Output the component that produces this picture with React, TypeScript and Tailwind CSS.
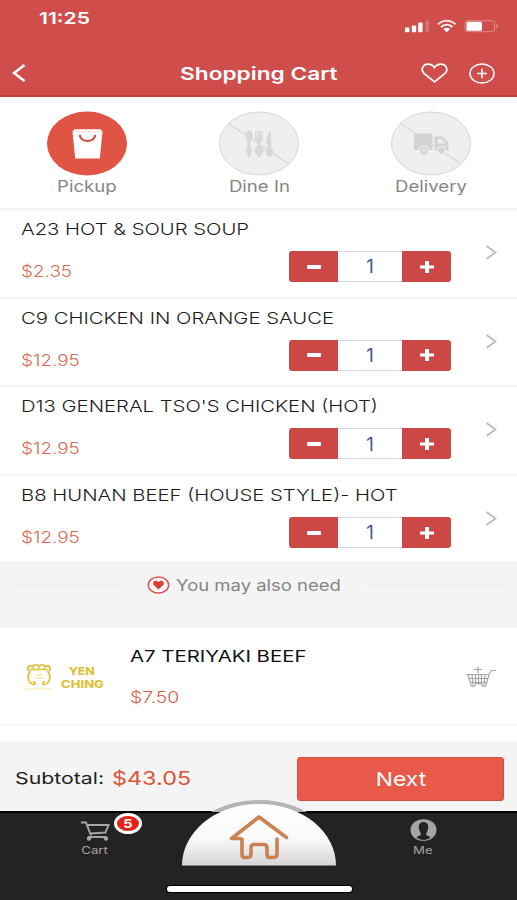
import React from 'react';

const cartItems = [
  { id: 1, name: 'A23 HOT & SOUR SOUP', price: '$2.35', quantity: 1 },
  { id: 2, name: 'C9 CHICKEN IN ORANGE SAUCE', price: '$12.95', quantity: 1 },
  { id: 3, name: "D13 GENERAL TSO'S CHICKEN (HOT)", price: '$12.95', quantity: 1 },
  { id: 4, name: 'B8 HUNAN BEEF (HOUSE STYLE)- HOT', price: '$12.95', quantity: 1 },
];

function StatusIcons() {
  return (
    <svg className="mt-[19px] h-[14px] w-[94px]" viewBox="0 0 94 14" fill="none">
      <g fill="#fff">
        <rect x="0" y="8.5" width="4.4" height="4.8" rx="1" />
        <rect x="6.8" y="6.5" width="4.4" height="6.8" rx="1" />
        <rect x="13.2" y="3.5" width="4.4" height="9.8" rx="1" />
        <rect x="20.4" y="1.5" width="3.6" height="11.8" rx="1" opacity="0.22" />
      </g>
      <path d="M33 5.4C38 0.6 45.5 0.6 50.5 5.4" stroke="#fbe3e2" strokeWidth="2" />
      <path d="M36 8C39.5 4.9 44 4.9 47.5 8" stroke="#fff" strokeWidth="2" />
      <path d="M38.4 10C40.5 8.2 43 8.2 45.1 10L41.75 13.2Z" fill="#fff" />
      <rect x="60" y="1.7" width="29.5" height="11" rx="3" stroke="#e08b89" strokeWidth="1" />
      <rect x="61.5" y="2.7" width="15.5" height="9" rx="1.5" fill="#fff" />
      <path d="M91.5 5.2C93.2 6 93.2 8.4 91.5 9.2Z" fill="#e9a9a8" />
    </svg>
  );
}

function Header() {
  return (
    <header className="h-[97px] border-b-2 border-[#c23f3e] bg-[#cf4e4c] text-white">
      <div className="flex h-[49px] items-start justify-between pl-[39px] pr-[18px]">
        <span className="mt-[8px] origin-left scale-x-[1.28] text-[16.5px] font-semibold leading-5">11:25</span>
        <StatusIcons />
      </div>
      <div className="grid h-[48px] grid-cols-[1fr_auto_1fr] items-center">
        <svg className="ml-[12px] h-[18px] w-[14px]" viewBox="0 0 14 18" fill="none" stroke="#fff" strokeWidth="2.6">
          <path d="M12.5 1L2 9L12.5 17" />
        </svg>
        <h1 className="scale-x-[1.295] pt-px text-[17.5px] font-semibold leading-6">Shopping Cart</h1>
        <div className="flex items-center justify-end gap-[21px] pr-[22px]">
          <svg className="h-[20px] w-[27px]" viewBox="0 0 27 20" fill="none" stroke="#fff" strokeWidth="1.7">
            <path d="M13.5 18.8L3 10.4C-0.5 7 1.6 1.2 7 1.2C10.3 1.2 12.3 2.6 13.5 4.6C14.7 2.6 16.7 1.2 20 1.2C25.4 1.2 27.5 7 24 10.4Z" />
          </svg>
          <svg className="h-[21px] w-[26px]" viewBox="0 0 26 21" fill="none" stroke="#fff" strokeWidth="1.5">
            <ellipse cx="13" cy="10.5" rx="12" ry="9.6" />
            <path d="M8 10.5H18M13 5.7V15.3" strokeWidth="1.6" />
          </svg>
        </div>
      </div>
    </header>
  );
}

function PickupIcon() {
  return (
    <svg className="h-[65px] w-[82px]" viewBox="0 0 82 65">
      <ellipse cx="41" cy="32.5" rx="40" ry="32" fill="#e05443" />
      <path d="M26.5 20.5L28.5 18.2H54.5L56.5 20.5L53.8 47.6H29.2Z" fill="#fff" />
      <path d="M26.5 20.7H56.5" stroke="#f3c4be" strokeWidth="0.7" />
      <path d="M34 25C36 31.5 47 31.5 49 25" fill="none" stroke="#d54b3b" strokeWidth="2" />
      <circle cx="34" cy="25" r="1.2" fill="#d54b3b" />
      <circle cx="49" cy="25" r="1.2" fill="#d54b3b" />
    </svg>
  );
}

function DisabledIcon({ children }: { children: React.ReactNode }) {
  return (
    <svg className="h-[65px] w-[82px]" viewBox="0 0 82 65">
      <ellipse cx="41" cy="32.5" rx="39.5" ry="31.5" fill="#efefef" stroke="#d6d6d6" />
      <path d="M10 12L71 53" stroke="#d6d6d6" strokeWidth="1.2" />
      {children}
    </svg>
  );
}

function DineInIcon() {
  return (
    <DisabledIcon>
      <g fill="#d8d8d8">
        <ellipse cx="31" cy="24" rx="3.8" ry="4.5" />
        <rect x="29.4" y="27" width="3.2" height="19" rx="1.5" />
        <path d="M37 20H38.4V26H39.4V20H42.6V26H43.6V20H45V28L42.6 31V46H39.4V31L37 28Z" />
        <path d="M53 19.5V46H49.8V33H48C48.5 27 50 22 53 19.5Z" />
        <ellipse cx="41" cy="39.5" rx="4.5" ry="5" />
        <ellipse cx="51.5" cy="41" rx="4" ry="4.5" />
        <ellipse cx="31" cy="40" rx="2.8" ry="4" />
      </g>
    </DisabledIcon>
  );
}

function DeliveryIcon() {
  return (
    <DisabledIcon>
      <g fill="#d3d3d3">
        <rect x="24" y="22.5" width="18.5" height="16.5" />
        <path d="M44.5 25.5H52L58.5 31V39.5H44.5Z" />
        <circle cx="34" cy="39.5" r="4.5" stroke="#efefef" strokeWidth="1.3" />
        <circle cx="51.5" cy="39.5" r="3.8" stroke="#efefef" strokeWidth="1.3" />
      </g>
      <path d="M47.5 28H51L55 31.5V32.5H47.5Z" fill="#efefef" />
      <path d="M32 39.5H36M34 37.5V41.5" stroke="#efefef" strokeWidth="0.9" />
    </DisabledIcon>
  );
}

function OrderTypes() {
  const types = [
    { label: 'Pickup', icon: <PickupIcon /> },
    { label: 'Dine In', icon: <DineInIcon /> },
    { label: 'Delivery', icon: <DeliveryIcon /> },
  ];

  return (
    <div className="grid h-[111px] grid-cols-3 pl-px pt-[14px]">
      {types.map((type) => (
        <div key={type.label} className="flex flex-col items-center">
          {type.icon}
          <span className="mt-px scale-x-[1.2] text-[15.5px] leading-5 text-[#868686]">{type.label}</span>
        </div>
      ))}
    </div>
  );
}

function Stepper({ quantity }: { quantity: number }) {
  return (
    <div className="grid h-[31px] w-[162px] grid-cols-[49px_64px_49px] overflow-hidden rounded-[3px]">
      <button className="flex items-center justify-center bg-[#cc4847]">
        <span className="h-[4px] w-[14px] rounded-[1px] bg-white" />
      </button>
      <span className="flex items-center justify-center border-y border-[#d9d9d9] bg-white pt-px text-[18.5px] text-[#46549a]">
        {quantity}
      </span>
      <button className="flex items-center justify-center bg-[#cc4847]">
        <svg className="h-[12px] w-[14px]" viewBox="0 0 14 12" stroke="#fff">
          <path d="M0 6H14" strokeWidth="3" />
          <path d="M7 0V12" strokeWidth="4" />
        </svg>
      </button>
    </div>
  );
}

function CartList() {
  return (
    <div className="grid h-[353px] grid-rows-[88.7px_88.7px_88.7px_1fr]">
      {cartItems.map((item) => (
        <div key={item.id} className="flex border-t-2 border-[#f4f4f4] pl-[21px]">
          <div className="flex w-[268px] flex-col items-start whitespace-nowrap">
            <h3 className="mt-[9px] origin-left scale-x-[1.228] text-[16.5px] font-light leading-5 text-[#1d1d1d]">
              {item.name}
            </h3>
            <span className="mt-[23px] origin-left scale-x-[1.22] text-[15.5px] font-light leading-5 text-[#d9694f]">
              {item.price}
            </span>
          </div>
          <div className="pt-[41px]">
            <Stepper quantity={item.quantity} />
          </div>
          <svg className="ml-[34px] mt-[35px] h-[15px] w-[12px]" viewBox="0 0 12 15" fill="none" stroke="#b9b9b9" strokeWidth="1.7">
            <path d="M1.5 1L10.5 7.5L1.5 14" />
          </svg>
        </div>
      ))}
    </div>
  );
}

function YenChingLogo() {
  return (
    <div className="flex w-[82px] items-center text-[#e0bf3a]">
      <svg className="h-[27px] w-[30px] shrink-0" viewBox="0 0 30 27" fill="none" stroke="#e0bf3a">
        <path d="M5 7C2 4 5 1 8.5 2.5C10 0.5 13 0.5 15 2C17 0.5 20 0.5 21.5 2.5C25 1 28 4 25 7" strokeWidth="1.8" />
        <path d="M6 5.5H24M9 2.5L10 5.5M15 2V5.5M21 2.5L20 5.5" strokeWidth="1.3" />
        <path d="M6.5 7C2.5 12 3.5 18.5 9.5 20.5C12.5 20.5 11.5 17.5 9 17.8M23.5 7C27.5 12 26.5 18.5 20.5 20.5C17.5 20.5 18.5 17.5 21 17.8" strokeWidth="1.7" />
        <path d="M12 11H18M10.5 14H19.5" strokeWidth="0.9" opacity="0.7" />
        <path d="M1 25H29" strokeWidth="0.9" strokeDasharray="2 0.8" opacity="0.6" />
      </svg>
      <div className="ml-[5px] flex w-[46px] flex-col items-center text-[10px] font-extrabold leading-[12.5px]">
        <span className="scale-x-[1.22]">YEN</span>
        <span className="scale-x-[1.3]">CHING</span>
      </div>
    </div>
  );
}

function Suggestions() {
  return (
    <section>
      <div className="flex h-[67px] items-start bg-[#f4f4f4] px-[12px] pt-[14px]">
        <span className="ml-[4px] mt-[10px] h-px w-[107px] bg-[#e9e9e9]" />
        <svg className="ml-[24px] mt-px h-[18px] w-[23px]" viewBox="0 0 23 18">
          <ellipse cx="11.5" cy="9" rx="10.2" ry="8" fill="#fff" stroke="#dc5550" strokeWidth="1.5" />
          <path d="M11.5 13.5L6.7 9C4.5 5.5 9 3 11.5 6C14 3 18.5 5.5 16.3 9Z" fill="#e03f36" />
        </svg>
        <h2 className="ml-[6px] w-[191px] origin-left scale-x-[1.155] whitespace-nowrap text-[16px] leading-5 text-[#858585]">
          You may also need
        </h2>
        <span className="mt-[10px] h-px w-[139px] bg-[#e9e9e9]" />
      </div>
      <div className="flex h-[98px] border-b-2 border-[#f9f9f9] pl-[24px]">
        <div className="mt-[36px]">
          <YenChingLogo />
        </div>
        <div className="ml-[24px] flex w-[335px] flex-col items-start">
          <h3 className="mt-[18px] origin-left scale-x-[1.235] text-[16.5px] leading-5 text-[#111]">A7 TERIYAKI BEEF</h3>
          <span className="mt-[22px] origin-left scale-x-[1.25] text-[15.5px] font-light leading-5 text-[#d4604c]">$7.50</span>
        </div>
        <svg className="mt-[38px] h-[24px] w-[32px]" viewBox="0 0 32 24" fill="none" stroke="#a3a7ab" strokeWidth="1.2">
          <path d="M31 4.5H26.5L24 8.5H1.5M3 8.5L5.5 17.5C6 21.5 10 21.5 10.5 17.5V8.5M24 8.5L21.5 17.5C21 21.5 17 21.5 16.5 17.5V8.5M3.5 12.5H23M5 16.5H22M7 8.5L8 19M13.5 8.5V18.5M20 8.5L19 19M10.5 17.5H16.5" />
          <path d="M9 3.5H17M13 0.5V7" />
        </svg>
      </div>
      <div className="h-[16px]" />
    </section>
  );
}

function Subtotal() {
  return (
    <div className="flex h-[69px] items-start bg-[#f4f4f4] pl-[15px] pt-[15px]">
      <span className="mt-[9px] w-[97px] origin-left scale-x-[1.29] text-[16.5px] leading-6 text-[#222]">Subtotal:</span>
      <span className="mt-[10px] w-[185px] origin-left scale-x-[1.23] text-[19px] leading-6 text-[#dc5239]">$43.05</span>
      <button className="flex h-[44px] w-[207px] items-center justify-center rounded-[3px] border border-[#d94b3c] bg-[#e85949] text-white">
        <span className="scale-x-[1.2] pt-[2px] text-[19px]">Next</span>
      </button>
    </div>
  );
}

function HomeButton() {
  return (
    <svg className="absolute left-[180px] top-[-13px] h-[69px] w-[159px]" viewBox="0 0 159 69" fill="none">
      <defs>
        <linearGradient id="dome" x1="0" y1="0" x2="0" y2="1">
          <stop offset="0" stopColor="#fff" />
          <stop offset="0.55" stopColor="#fafafa" />
          <stop offset="1" stopColor="#d5d5d5" />
        </linearGradient>
        <clipPath id="rim">
          <rect width="159" height="12" />
        </clipPath>
      </defs>
      <ellipse cx="79" cy="65" rx="83" ry="65" fill="#b5b5b5" clipPath="url(#rim)" />
      <path d="M2 65.5C2 33 34 4 79 4C124 4 156 33 156 65.5Z" fill="url(#dome)" />
      <path
        d="M60 38.5H51.5L79 17L106.5 37.5M62 39V54.500C62 56.5 63 57.5 65 57.5H67C70 57.5 71 56.5 71 54.5V47C71 45 73 44.500 74 44.5H83C86 44.5 87 45.5 87 48V54.5C87 57 88 57.5 90 57.5H93C96 57.5 97 56.5 97 54.5V39"
        stroke="#cb8151"
        strokeWidth="3.6"
        strokeLinecap="round"
        strokeLinejoin="round"
      />
    </svg>
  );
}

function TabBar() {
  return (
    <nav className="relative h-[89px] border-t-2 border-black bg-[#232323] text-[#a5a5a5]">
      <div className="flex justify-between pl-[70px] pr-[69px]">
        <div className="flex w-[50px] flex-col items-center pt-[8px]">
          <svg className="h-[20px] w-[29px]" viewBox="0 0 29 20" fill="none" stroke="#a5a5a5" strokeWidth="2">
            <path d="M0 1.5H5L10 14.5M6 4H27.5L24.5 11.5L9 12.5M7 16H25" />
            <circle cx="8" cy="17.5" r="2.2" fill="#a5a5a5" stroke="none" />
            <circle cx="25" cy="17.5" r="2.2" fill="#a5a5a5" stroke="none" />
          </svg>
          <span className="mt-[3px] scale-x-[1.26] text-[10.5px] leading-[14px]">Cart</span>
        </div>
        <div className="flex w-[50px] flex-col items-center pt-[6px]">
          <svg className="h-[22px] w-[27px]" viewBox="0 0 27 22">
            <ellipse cx="13.5" cy="11" rx="13" ry="10.8" fill="#a5a5a5" />
            <path d="M13.5 3C9.500 3 8.3 6 9 10C9.4 12.5 11 14 10.8 15.5C10.5 17 7.5 17 6.5 18.5C10.5 21.8 16.5 21.8 20.5 18.5C19.5 17 16.5 17 16.2 15.5C16 14 17.6 12.5 18 10C18.7 6 17.5 3 13.5 3Z" fill="#232323" />
          </svg>
          <span className="mt-[3px] scale-x-[1.25] text-[10.5px] leading-[14px]">Me</span>
        </div>
      </div>
      <span className="absolute left-[114px] top-0 flex h-[21px] w-[28px] items-center justify-center rounded-[50%] border-[3px] border-white bg-[#e8201a] text-[12px] font-bold text-white">
        <span className="scale-x-[1.2]">5</span>
      </span>
      <HomeButton />
      <span className="absolute bottom-[8px] left-[167px] h-[6px] w-[185px] rounded-full bg-white ring-1 ring-black" />
    </nav>
  );
}

export default function App() {
  return (
    <div className="h-[900px] w-[517px] overflow-hidden bg-white font-['Inter',sans-serif]">
      <Header />
      <OrderTypes />
      <CartList />
      <Suggestions />
      <Subtotal />
      <TabBar />
    </div>
  );
}
